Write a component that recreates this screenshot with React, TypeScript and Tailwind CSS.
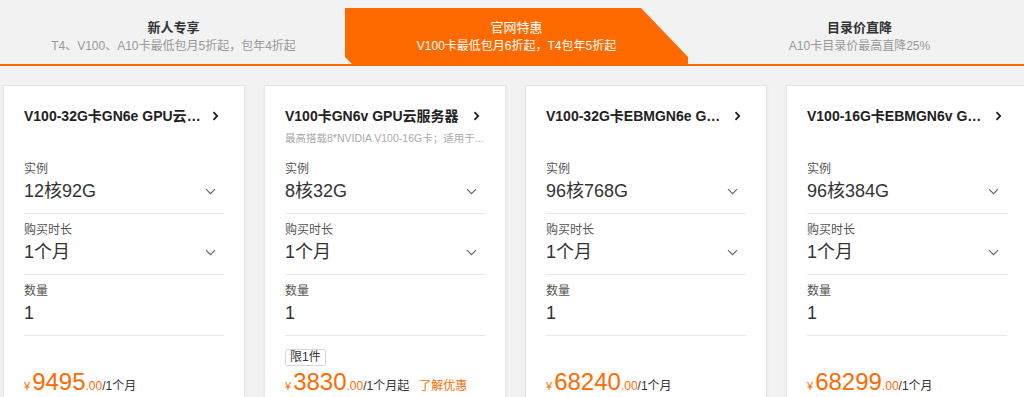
const FONT = "font-['Liberation_Sans','Noto_Sans_CJK_SC',sans-serif]";

type Product = {
  title: string;
  desc?: string;
  spec: string;
  limit?: boolean;
  price: string;
  unit: string;
  promo?: string;
};

const products: Product[] = [
  { title: "V100-32G卡GN6e GPU云服务器", spec: "12核92G", price: "9495", unit: "/1个月" },
  {
    title: "V100卡GN6v GPU云服务器",
    desc: "最高搭载8*NVIDIA V100-16G卡；适用于...",
    spec: "8核32G",
    limit: true,
    price: "3830",
    unit: "/1个月起",
    promo: "了解优惠",
  },
  { title: "V100-32G卡EBMGN6e GPU云服务器", spec: "96核768G", price: "68240", unit: "/1个月" },
  { title: "V100-16G卡EBMGN6v GPU云服务器", spec: "96核384G", price: "68299", unit: "/1个月" },
];

export default function App() {
  return (
    <main className={`h-[397px] w-[1024px] overflow-hidden bg-[#f2f2f2] ${FONT}`}>
      <div className="flex h-[66px] items-end border-b-2 border-[#ff6a00] pl-[2px]">
        <Tab title="新人专享" sub="T4、V100、A10卡最低包月5折起，包年4折起" />
        <Tab title="官网特惠" sub="V100卡最低包月6折起，T4包年5折起" active />
        <Tab title="目录价直降" sub="A10卡目录价最高直降25%" />
      </div>

      <div className="mt-[19px] flex gap-[19px] pl-[3px]">
        {products.map((p) => (
          <Card key={p.title} p={p} />
        ))}
      </div>
    </main>
  );
}

function Tab({ title, sub, active }: { title: string; sub: string; active?: boolean }) {
  return (
    <div
      className={`h-[56px] w-[343px] shrink-0 pt-[11px] text-center ${
        active
          ? "bg-[#ff6a00] text-white [clip-path:polygon(0_0,296px_0,343px_49px,343px_56px,7px_56px,0_49px)]"
          : "text-[#333]"
      }`}
    >
      <p className={`text-[13px] leading-[18px] ${active ? "" : "font-bold"}`}>{title}</p>
      <p className={`text-[12px] leading-[18px] ${active ? "text-white" : "text-[#999]"}`}>{sub}</p>
    </div>
  );
}

function Card({ p }: { p: Product }) {
  return (
    <div className="h-[340px] w-[242px] shrink-0 border border-[#e6e6e6] bg-white px-[20px] shadow-[0_1px_3px_rgba(0,0,0,0.05)]">
      <div className="h-[67px] pt-[20px]">
        <div className="flex items-center justify-between">
          <p className="truncate pr-[6px] text-[14px] font-bold leading-[20px] text-[#222]">{p.title}</p>
          <svg width="7" height="10" viewBox="0 0 7 10" className="mr-[5px] shrink-0">
            <path d="M1.5 1.2 5.2 5 1.5 8.8" fill="none" stroke="#222" strokeWidth="1.8" />
          </svg>
        </div>
        {p.desc && (
          <p className="mt-[4px] overflow-hidden whitespace-nowrap text-[10.5px] leading-[16px] text-[#aaa]">
            {p.desc}
          </p>
        )}
      </div>

      <Field label="实例" value={p.spec} select />
      <Field label="购买时长" value="1个月" select />
      <Field label="数量" value="1" />

      <div className="pt-[8px]">
        <div className="h-[17px]">
          {p.limit && (
            <span className="inline-block rounded-[2px] border border-[#d6d6d6] px-[4px] text-[12px] leading-[15px] text-[#333]">
              限1件
            </span>
          )}
        </div>
        <div className="mt-[7px] flex items-baseline whitespace-nowrap text-[#ff6a00]">
          <span className="text-[11px]">¥</span>
          <span className="ml-[2px] text-[24px] leading-[28px]">{p.price}</span>
          <span className="text-[12px]">.00</span>
          <span className="text-[12px] text-[#333]">{p.unit}</span>
          {p.promo && <span className="ml-[10px] text-[12px]">{p.promo}</span>}
        </div>
      </div>
    </div>
  );
}

function Field({ label, value, select }: { label: string; value: string; select?: boolean }) {
  return (
    <div className="border-b border-[#e8e8e8] pb-[8px] pt-[8px]">
      <p className="text-[12px] leading-[16px] text-[#555]">{label}</p>
      <div className="flex h-[28px] items-center justify-between">
        <span className="text-[18px] text-[#333]">{value}</span>
        {select && (
          <svg width="11" height="7" viewBox="0 0 11 7" className="mr-[8px]">
            <path d="M1 1.2 5.5 5.7 10 1.2" fill="none" stroke="#666" strokeWidth="1.2" />
          </svg>
        )}
      </div>
    </div>
  );
}
